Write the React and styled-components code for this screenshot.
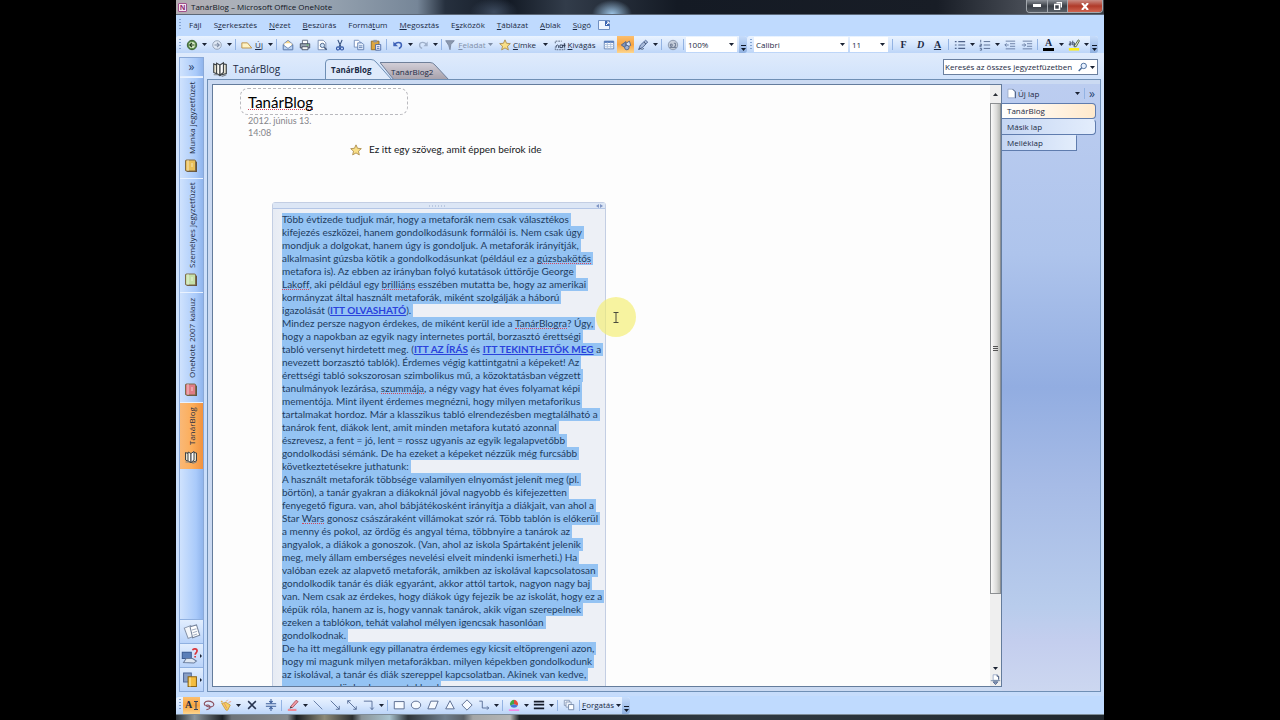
import React, { useState } from 'react'
import styled, { createGlobalStyle } from 'styled-components'

const GlobalStyle = createGlobalStyle`
  * { box-sizing: border-box; }
  body {
    margin: 0;
    background: #000;
    color: #1c2a44;
    font: 8px/12px 'Open Sans', 'Noto Sans', sans-serif;
    overflow: hidden;
  }
  button, input, select {
    margin: 0;
    padding: 0;
    border: 0;
    background: none;
    color: inherit;
    font: inherit;
    outline: none;
  }
  svg { display: block; flex: none; }
  h1, p { margin: 0; font-weight: normal; }
`

const ICONS = {
  back: <><circle cx="7" cy="7" r="5.5" fill="#5f8f4d" stroke="#2f5428" /><circle cx="7" cy="7" r="3.6" fill="#d9ecc9" /><path d="M10 7H4.6M7 4.5 4.4 7 7 9.500" stroke="#1f3d1b" strokeWidth="1.4" fill="none" /></>,
  forward: <><circle cx="7" cy="7" r="5" fill="#dfe8f5" stroke="#8d9bb0" /><path d="M4 7h5.500M7 4.500 9.600 7 7 9.500" stroke="#7f8ea6" strokeWidth="1.3" fill="none" /></>,
  fresh: <path d="M1 10.500V4.500h6.500l5 6z" fill="#fff3c4" stroke="#b88a3c" />,
  mail: <><path d="M1.500 6 7 1.500 12.500 6v6.500h-11z" fill="#f7d688" stroke="#6c86b5" /><path d="M3 5h8v4l-4 2-4-2z" fill="#fff" /><path d="m1.500 7 5.500 4 5.500-4v5.500h-11z" fill="#bcd3f2" stroke="#5c7db1" /></>,
  print: <><path d="M4 1.500h6V6H4z" fill="#fff" stroke="#59657a" /><path d="M1.500 5.500h11v5h-11z" fill="#9aa4b2" stroke="#3f4a5c" /><path d="M3.500 9h7v3.500h-7z" fill="#f7f7f7" stroke="#3f4a5c" /><path d="M9 7h2" stroke="#57d03e" /></>,
  preview: <><path d="M2.500 1.500h6l3 3v8h-9z" fill="#fff" stroke="#6d83aa" /><circle cx="7.500" cy="7.500" r="2.500" fill="#cfe4fa" stroke="#40597f" /><path d="m9.500 9.500 3 3" stroke="#40597f" strokeWidth="1.600" /></>,
  cut: <><path d="m4.500 1 3.500 8M9.500 1 6 9" stroke="#35507f" strokeWidth="1.300" /><circle cx="4.700" cy="11" r="1.800" fill="none" stroke="#2f54a5" strokeWidth="1.300" /><circle cx="9.300" cy="11" r="1.800" fill="none" stroke="#2f54a5" strokeWidth="1.300" /></>,
  copy: <><path d="M1.500 1.500h5l2 2v6h-7z" fill="#fff" stroke="#6b86b7" /><path d="M5.500 4.500h5l2 2v6h-7z" fill="#e4eefc" stroke="#5a78ad" /><path d="M7 8h4M7 10h4" stroke="#5a78ad" /></>,
  paste: <><path d="M1.500 2.500h9v10h-9z" fill="#dda63d" stroke="#8b6722" /><path d="M4 1h4v3H4z" fill="#8d95a3" /><path d="M6.500 6.500h6v6.500h-6z" fill="#f2f6ff" stroke="#3f60a3" /><path d="M8 9h3M8 11h3" stroke="#3f60a3" /></>,
  undo: <><path d="M3 7c1.500-4 8-4 8 0 0 2-1.500 3.500-3 4" fill="none" stroke="#3e62b8" strokeWidth="1.800" /><path d="M1.500 3v5.500H7z" fill="#3e62b8" /></>,
  redo: <><path d="M11 7c-1.500-4-8-4-8 0 0 2 1.500 3.500 3 4" fill="none" stroke="#9fb0ca" strokeWidth="1.600" /><path d="M12.500 3v5.500H7.500z" fill="#9fb0ca" /></>,
  flag: <path d="M2 2h10l-4 4.500-1 6-1.500-5z" fill="#8b98ad" stroke="#7886a0" />,
  star: <path d="m7 1 1.800 4 4.400.4-3.300 3 1 4.300L7 10.400l-3.900 2.300 1-4.300-3.300-3L5.200 5z" fill="#f9df86" stroke="#a8894a" />,
  clip: <><path d="M1.500 5V2.500H9M12.500 5v7.500h-11V9" fill="none" stroke="#48566e" strokeDasharray="2 1" /><path d="M2.500 10V8l1.500-1 1.500 1v2.500M7 7h3v3H7zM12 5v5M9.500 7.500h4" stroke="#25334d" fill="none" /></>,
  table: <><path d="M1.500 2.500h11v9h-11z" fill="#fff" stroke="#5e7cae" /><path d="M1.500 3.500h11" stroke="#4d74b8" strokeWidth="2" /><path d="M1.500 6.500h11M1.500 9h11M5 4v8M9 4v8" stroke="#a9bddb" /></>,
  shapes: <><path d="M1.500 7 7 3v8z" fill="#8196b9" stroke="#485f89" /><path d="m7 5 4-2.500 1.500 5-4.500 2z" fill="#d6e0f0" stroke="#485f89" /><circle cx="8" cy="10" r="2.600" fill="#9db1d4" stroke="#485f89" /></>,
  pen: <><path d="m2 12 2-5 6-5.500 2.500 2L7 9.500z" fill="#a9bbd9" stroke="#4a6290" /><path d="M2 12.500c2-3 3 1 6-1.500M8 3.500l2.500 2.500" fill="none" stroke="#30415f" /></>,
  language: <><circle cx="7" cy="7" r="5.500" fill="#c7cfdc" stroke="#8593aa" /><path d="M4 8.500V6h2v2.500H4M8 5h2v3.500H8M3 10h8" stroke="#606e88" fill="none" /></>,
  bullets: <path d="M1 3h2M1 7h2M1 11h2M5 3h8M5 7h8M5 11h8" stroke="#4e6288" strokeWidth="1.300" />,
  numbers: <path d="M2 1v3M1 6h2v1.500H1V9h2M1 11h2v2H1M5.500 3H13M5.500 7H13M5.500 11H13" fill="none" stroke="#4e6288" />,
  outdent: <path d="M2 2.500h11M7 5.500h6M7 8.500h6M2 11.500h11M5.500 7H1M3 5 1 7l2 2" fill="none" stroke="#60759b" />,
  indent: <path d="M2 2.500h11M7 5.500h6M7 8.500h6M2 11.500h11M1 7h4.500M3.500 5l2 2-2 2" fill="none" stroke="#60759b" />,
  marker: <><path d="M1 10.500h12v3H1z" fill="#ffef1a" /><path d="m7 8.500 5-7.500 1.500 1-4 7H7z" fill="#dfe9cf" stroke="#4b5a38" /><path d="M1.500 3.500h2V7h-2V5.500h2M5.500 2v5h2V4.500h-2" fill="none" stroke="#33415c" /></>,
  window: <><path d="M1.500 2.500h11v9h-11z" fill="#eef5ff" stroke="#6f8fc2" /><path d="M8 3h4.500v5H8z" fill="#3e67b2" /><path d="m9 7 3-3M10 4h2v2" stroke="#fff" fill="none" /></>,
  book: <><path d="M7 12.500 1.500 10V2.500L4 3.500M7 12.500l5.500-1.500V3L10 2.500" fill="#e6e2cf" stroke="#3e4346" /><path d="m4 2 3 1.500v9L4 11z" fill="#fbfaf2" stroke="#3e4346" /><path d="m7 3.500 3-2V10l-3 2.500z" fill="#fff" stroke="#3e4346" /><path d="M1.500 12h4M8.500 13.500 12.500 12" stroke="#7d8387" /></>,
  lasso: <path d="M3 8C0 5.500 2 2.500 6 2.500s7 2 6.500 4.500S7 10 4.500 8.500C3 7.500 6 6 7.500 8s.5 4-3.500 4.500" fill="none" stroke="#8c5160" strokeWidth="1.400" />,
  highlighter: <><path d="m2 5 5-1 5 3-3 6H7z" fill="#f6cf62" stroke="#c79a45" /><path d="m5 5 3 6M7 3l2-2M10 4l3-1" stroke="#e58b6c" /><path d="M2 2v2M1 3h2" stroke="#e5a93c" /></>,
  close: <path d="m2.500 2.500 9 9M11.500 2.500l-9 9" stroke="#26334f" strokeWidth="1.800" />,
  space: <path d="M1 5.500h12M1 8.500h12M7 0v4M5 2.500 7 4.500 9 2.500M7 14v-4M5 11.500 7 9.500l2 2" fill="none" stroke="#3c5d99" strokeWidth="1.200" />,
  redpen: <><path d="m4 9 6.500-7.500L13 3 6.500 10z" fill="#ef9aa3" stroke="#a8525d" /><path d="m4 9 2.500 1L3 11.500z" fill="#333" /><path d="M1 11.500h10V14H1z" fill="#f08a98" /></>,
  line: <path d="m2 2 10 10" stroke="#566f9c" />,
  arrow: <path d="m2 2 10 10M12 8v4H8" stroke="#4c638f" fill="none" />,
  doubleArrow: <path d="m2 2 10 10M12 8.500V12H8.500M2 5.500V2h3.500" stroke="#4c638f" fill="none" />,
  corner: <path d="M1 2.500h9.500V12M8.500 10l2 2.500 2-2.500" stroke="#4c638f" fill="none" />,
  rect: <path d="M1.500 3h11.500v8.500H1.500z" fill="#f6faff" stroke="#4c5f85" />,
  ellipse: <ellipse cx="7" cy="7" rx="5.500" ry="4.500" fill="#f6faff" stroke="#4c5f85" />,
  parallelogram: <path d="M4.500 2.500H13l-3.500 9H1z" fill="#f6faff" stroke="#4c5f85" />,
  triangle: <path d="m7 2 5 9.500H2z" fill="#f6faff" stroke="#4c5f85" />,
  diamond: <path d="m7 1 6 6-6 6-6-6z" fill="#f6faff" stroke="#4c5f85" />,
  elbow: <path d="M1.500 2.500H5v8h7.500M10.500 8.500l2 2-2 2" fill="none" stroke="#4c638f" />,
  palette: <><path d="M7 6V1a5 5 0 0 1 4.500 6.500z" fill="#e34b3b" /><path d="M7 6V1a5 5 0 0 0-4.500 6.500z" fill="#44a548" /><path d="m7 6-4.500 1.500a5 5 0 0 0 9 0z" fill="#4676d8" /><path d="M1 12h12v2H1z" fill="#f38be8" /></>,
  weights: <path d="M1 3h12M1 6.500h12M1 11h12" stroke="#141b28" strokeWidth="2" />,
  stack: <><path d="M1.500 1.500h6v6h-6z" fill="#eef3fb" stroke="#8597b5" /><path d="M3.500 3.500h6v6h-6z" fill="#eef3fb" stroke="#8597b5" /><path d="M6.500 6.500h6v6h-6z" fill="#fff" stroke="#6b7fa2" /></>,
  search: <><circle cx="8" cy="5.500" r="3.800" fill="#e7f1ff" stroke="#466998" strokeWidth="1.300" /><path d="m5 8.500-4 4" stroke="#466998" strokeWidth="2" /></>,
  page: <><path d="M2.500 1.500h6l3 3v8h-9z" fill="#fff" stroke="#93a5c6" /><path d="M8.500 1.500 12 5v8" fill="none" stroke="#34486e" /></>,
  nextPage: <><path d="M4 1h5l2 2v5H4z" fill="#fff" stroke="#8ea0c0" /><path d="M9 1v2h2v4" fill="none" stroke="#34486e" /><path d="M1 8.500h12" stroke="#647c9c" /><path d="M4 10h6l-3 3.500z" fill="#8fa3c6" stroke="#43587f" /></>,
  cards: <><path d="m1 4 5-2 3 8-5 2z" fill="#f4f7fb" stroke="#8592a8" strokeWidth=".8" /><path d="m5.500 3 5-1.500 2.500 8-5.500 2z" fill="#fff" stroke="#75839b" strokeWidth=".8" /><path d="m7 5.500 3.500-1M7.500 7.500l3.500-1M8 9.500l3-1" stroke="#a7b2c4" strokeWidth=".8" /></>,
  question: <><path d="M1 4h7v5H1z" fill="#5b7fb8" stroke="#3a5b92" strokeWidth=".8" /><path d="m2 12 2-3h5l3 2-2 1.500z" fill="#dfe7f2" stroke="#6a7d9d" strokeWidth=".8" /><path d="M9 2.500c.5-1.500 3.500-1.500 3.500.5 0 1.500-1.500 1.500-1.500 3M11 7v1.200" stroke="#d9363c" strokeWidth="1.300" fill="none" /></>,
  books: <><path d="M2 1.500h6v7H2z" fill="#8aa0c6" stroke="#4d6798" strokeWidth=".8" /><path d="M5.500 4.500h6.500v7.500H5.500z" fill="#f4bd3f" stroke="#8a6519" strokeWidth=".8" /><path d="M7 5v7" stroke="#fbe3a0" /></>,
}

const Icon = ({ name, size = 12 }) => (
  <svg width={size} height={size} viewBox="0 0 14 14" fill="none" aria-hidden="true">{ICONS[name]}</svg>
)

const Caret = ({ color = '#1a2233' }) => (
  <svg width="5" height="3" viewBox="0 0 5 3" aria-hidden="true"><path d="M0 0h5L2.500 3z" fill={color} /></svg>
)

/* ---------- window ---------- */

const Desktop = styled.div`
  display: flex;
  justify-content: center;
  height: 100vh;
`

const Window = styled.main`
  display: flex;
  flex-direction: column;
  width: 72.5%;
  min-width: 0;
  background: #bfdafe;
`

const TitleBar = styled.header`
  display: flex;
  align-items: center;
  gap: 4px;
  height: 15px;
  padding-left: 2px;
  color: #10151e;
  border-bottom: 1px solid #5c6878;
  background:
    radial-gradient(ellipse 20px 14px at 436px 14px, #9cc3e4, transparent),
    radial-gradient(ellipse 24px 14px at 318px 12px, #3c4a5e, transparent),
    linear-gradient(90deg, #b3adb2 0, #a9b1bb 8%, #93a0ae 17%, #768698 26%, #26303e 29%, #141b26 36%, #323c4a 42%, #141a24 54%, #181d26 82%, #4a4f58 92%, #3b3f46 100%);
`

const AppIcon = styled.span`
  width: 9px;
  height: 9px;
  border: 1px solid #a04f8b;
  border-radius: 1px;
  background: #f5e6f2;
  color: #8a2c72;
  font: bold 7px/7px 'Open Sans', sans-serif;
  text-align: center;
`

const WindowButtons = styled.div`
  display: flex;
  align-self: flex-start;
  height: 13px;
  margin: 0 1px 0 auto;
  border: 1px solid #a3a8ae;
  border-top: 0;
  border-radius: 0 0 4px 4px;
  overflow: hidden;
`

const WindowButton = styled.button`
  display: grid;
  place-items: center;
  width: ${p => (p.$danger ? 35 : 20)}px;
  border-left: ${p => (p.$first ? 0 : '1px solid #a3a8ae')};
  background: ${p => (p.$danger ? 'linear-gradient(#c98c84, #b03a29 50%, #cf6450)' : 'linear-gradient(#8b9097, #3a3f46 50%, #5b6169)')};
`

/* ---------- menu and toolbars ---------- */

const MenuBar = styled.nav`
  display: flex;
  align-items: center;
  height: 20px;
  margin-bottom: 1px;
  padding-left: 2px;
`

const Grip = styled.span`
  width: 2px;
  height: 12px;
  margin: 0 2px 0 1px;
  background: repeating-linear-gradient(#83a3d2 0 1px, transparent 1px 3px);
`

const MenuItem = styled.button`
  padding: 0 6px;
  white-space: nowrap;
`

const ToolRow = styled.div`
  display: flex;
  height: 17px;
`

const Toolbar = styled.div`
  display: flex;
  align-items: center;
  height: 17px;
  padding-left: 2px;
  border-radius: 3px;
  background: linear-gradient(#eaf3ff, #d6e6fd 50%, #bcd5f8);
`

const Tool = styled.button`
  display: flex;
  align-items: center;
  justify-content: center;
  gap: 2px;
  flex: none;
  min-width: ${p => p.$width || 17}px;
  height: 17px;
  white-space: nowrap;
  color: ${p => (p.$muted ? '#8291aa' : 'inherit')};
  background: ${p => (p.$active ? 'linear-gradient(#fbbf70, #f8a43f 50%, #fdd68f)' : 'none')};
`

const Drop = styled.button`
  display: grid;
  place-items: center;
  flex: none;
  width: 8px;
  height: 17px;
`

const Divider = styled.span`
  flex: none;
  width: 1px;
  height: 11px;
  margin: 0 2px;
  background: #93b3e3;
`

const Overflow = styled.button`
  display: flex;
  align-items: flex-end;
  justify-content: center;
  width: 8px;
  height: 17px;
  padding-bottom: 2px;
  border-radius: 0 3px 3px 0;
  background: linear-gradient(#c6dcfb, #8fb0e0);
`

const Combo = styled.label`
  display: flex;
  align-items: center;
  width: ${p => p.$width}px;
  height: 15px;
  margin-right: 2px;
  padding-right: 3px;
  background: #fff;

  select {
    flex: 1;
    min-width: 0;
    padding-left: 2px;
    appearance: none;
  }
`

const Glyph = styled.span`
  font: ${p => p.$font || 'bold'} 10px/${p => (p.$bar ? 10 : 12)}px 'Liberation Serif', serif;
  text-decoration: ${p => (p.$underline ? 'underline' : 'none')};
  border-bottom: ${p => (p.$bar ? '3px solid #000' : 0)};
  padding: ${p => (p.$bar ? '0 2px' : 0)};
`

/* ---------- notebook rail ---------- */

const Middle = styled.div`
  display: flex;
  flex: 1;
  min-height: 0;
  padding: 0 3px 4px 3px;
  background: linear-gradient(#dfebfc, #cfe1fb 30px, #c6dcfb);
`

const Rail = styled.aside`
  display: flex;
  flex-direction: column;
  width: 25px;
  margin: 4px 3px 0 0;
  border: 1px solid #8aa9d8;
  background: linear-gradient(90deg, #cfe2fd, #a9cafa 70%, #8fb4ec);
`

const RailToggle = styled.button`
  height: 19px;
  border-bottom: 1px solid #e3eefd;
  color: #26426f;
  font-size: 12px;
`

const NotebookTab = styled.button`
  display: flex;
  align-items: center;
  gap: 5px;
  height: ${p => p.$length}px;
  padding: 5px 0;
  writing-mode: vertical-rl;
  transform: rotate(180deg);
  white-space: nowrap;
  border-bottom: 1px solid #e9f2ff;
  background: ${p => (p.$active ? 'linear-gradient(90deg, #f0923f, #fcae5b 50%, #f9b877)' : 'none')};

  svg { transform: rotate(180deg); }
`

const RailButton = styled.button`
  display: flex;
  align-items: center;
  justify-content: center;
  gap: 1px;
  height: 24px;
  border-top: 1px solid #8fb0e0;
  background: linear-gradient(#e2eefe, #b9d3fa);
`

const Spacer = styled.div`
  flex: 1;
`

/* ---------- sections ---------- */

const Content = styled.section`
  display: flex;
  flex-direction: column;
  flex: 1;
  min-width: 0;
`

const SectionRow = styled.div`
  display: flex;
  align-items: flex-end;
  height: 26px;
`

const NotebookName = styled.div`
  display: flex;
  align-items: center;
  gap: 5px;
  width: 118px;
  height: 20px;
  padding-left: 5px;
  font-size: 10px;
`

const SectionTab = styled.button`
  position: relative;
  display: grid;
  z-index: ${p => (p.$front ? 1 : 0)};
  margin-left: ${p => (p.$front ? 0 : -13)}px;
  font-weight: ${p => (p.$active ? 'bold' : 'normal')};

  svg, span { grid-area: 1 / 1; }
  svg { align-self: end; }
  span {
    align-self: end;
    position: relative;
    padding: 0 0 ${p => (p.$front ? 3 : 1)}px ${p => (p.$front ? 6 : 11)}px;
    text-align: left;
  }
`

const SearchBox = styled.form`
  display: flex;
  align-items: center;
  align-self: center;
  gap: 2px;
  width: 155px;
  height: 16px;
  margin: 2px 3px 0 auto;
  padding: 0 2px 0 1px;
  border: 1px solid #6a7f9f;
  background: #fff;

  input {
    flex: 1;
    min-width: 0;
  }
  input::placeholder { color: #1c2a44; opacity: 1; }
`

const Frame = styled.div`
  display: flex;
  flex: 1;
  min-height: 0;
  padding: 4px 0 4px 4px;
  border: 1px solid #6f8fb5;
  background: #cbdaf2;
`

const Page = styled.article`
  position: relative;
  flex: 1;
  min-width: 0;
  padding: 3px 0 0 27px;
  overflow: hidden;
  border: 1px solid #647c9c;
  border-right: 0;
  background: #fdfdfd;
  color: #16181c;
  font: 10px/13px Lato, sans-serif;
  font-variant-ligatures: none;
`

const PageTitle = styled.h1`
  width: 168px;
  height: 27px;
  padding-left: 7px;
  border: 1px dashed #b9b9be;
  border-radius: 8px;
  color: #000;
  font: 15px/26px Lato, sans-serif;
`

const Stamp = styled.p`
  padding-left: 8px;
  color: #85858a;
  font-size: 9px;
  line-height: 12px;
`

const Tagged = styled.p`
  display: flex;
  align-items: center;
  gap: 7px;
  margin: 4px 0 0 110px;
`

const Note = styled.section`
  width: 334px;
  margin: 46px 0 0 32px;
  border: 1px solid #c3cee3;
  border-radius: 3px 3px 0 0;
  background: linear-gradient(90deg, #e6ebf4, #edf0f6 12px);
`

const NoteHandle = styled.div`
  display: grid;
  grid-template-columns: 1fr auto 1fr;
  align-items: center;
  height: 6px;
  padding-right: 2px;
  border-bottom: 1px solid #b4c6e6;
  background: #dce6f5;

  svg:first-child { grid-column: 2; }
  svg:last-child { justify-self: end; }
`

const NoteText = styled.div`
  padding: 4px 0 0 9px;
  color: #1f3c5e;
`

const Line = styled.p`
  width: fit-content;
  height: 13px;
  padding-right: 2px;
  white-space: pre;
  background: #94c3f3;
`

const Link = styled.a`
  color: #2a42dc;
  font-weight: bold;
  text-decoration: underline;
`

const Misspelt = styled.span`
  display: inline-block;
  height: 12px;
  line-height: 13px;
  vertical-align: top;
  border-bottom: 1px dotted #d3455c;
`

const TitleWord = styled(Misspelt)`
  height: 21px;
  line-height: 26px;
`

const Pointer = styled.svg`
  position: absolute;
  left: 383px;
  top: 212px;
`

const ScrollBar = styled.div`
  display: flex;
  flex-direction: column;
  align-items: center;
  width: 12px;
  border: 1px solid #647c9c;
  border-left: 0;
  background: #efefef;
`

const ScrollButton = styled.button`
  display: grid;
  place-items: center;
  width: 11px;
  height: ${p => p.$height}px;
`

const ScrollThumb = styled.div`
  display: grid;
  place-items: center;
  flex: 490;
  width: 11px;
  border: 1px solid #8c8f92;
  background: linear-gradient(90deg, #fafafa, #dcdcda 60%, #b9bbb7);
`

const ScrollTrack = styled.div`
  flex: 69;
`

/* ---------- page list ---------- */

const PageList = styled.aside`
  width: 98px;
  margin: 0 0 -4px;
  background: linear-gradient(#bccdf0, #aec4ec 28%, #92ade1 50%, #a6bbe6 66%, #b8ccec 86%, #c4ceee 92%, #ccd7f0);
`

const NewPage = styled.div`
  display: flex;
  align-items: center;
  gap: 2px;
  height: 19px;
  padding: 0 5px 0 4px;

  button:first-child {
    display: flex;
    align-items: center;
    gap: 1px;
    margin-right: auto;
  }
  button:last-child {
    color: #26426f;
    font-size: 12px;
  }
`

const PageTab = styled.button`
  display: block;
  width: ${p => (p.$sub ? 75 : 94)}px;
  height: 16px;
  padding-left: 5px;
  border: 1px solid #5f7cae;
  border-left: 0;
  border-top-color: ${p => (p.$active ? '#5f7cae' : 'transparent')};
  border-radius: 0 ${p => (p.$sub ? '0 0' : '4px 4px')} 0;
  text-align: left;
  background: ${p => (p.$active ? 'linear-gradient(90deg, #fff, #ffe9cc)' : 'linear-gradient(90deg, #c5d6f3, #e3edfc)')};
`

const DrawRow = styled.footer`
  display: flex;
  align-items: center;
  height: 18px;
`

const TaskBar = styled.div`
  height: 6px;
  border-top: 1px solid #7e8c98;
  background: linear-gradient(90deg, #2b3238 0, #8b959c 2%, #1d2226 5%, #6d7378 6%, #85898c 12%, #1b1f23 13%, #8d8a78 16%, #2b2f31 19%, #8a9499 20%, #a9c3ce 23%, #30363b 25%, #6f7e8c 29%, #5a6066 31%, #a4a6a6 32%, #b4b6b6 36%, #20262b 37%, #303a42 60%, #20272d 100%);
`

// an underscore goes before the letter that gets the accelerator line
const Label = ({ text }) => {
  const at = text.indexOf('_')
  if (at < 0) return <span>{text}</span>
  return <span>{text.slice(0, at)}<u>{text[at + 1]}</u>{text.slice(at + 2)}</span>
}

const menus = ['Fá_jl', 'S_zerkesztés', '_Nézet', '_Beszúrás', 'Formá_tum', '_Megosztás', 'E_szközök', '_Táblázat', '_Ablak', '_Súgó']

const standardTools = [
  { icon: 'back', label: 'Vissza', drop: true },
  { icon: 'forward', label: 'Előre', drop: true },
  '|',
  { icon: 'fresh', label: 'Új', text: '_Új', drop: true, width: 28 },
  '|',
  { icon: 'mail', label: 'E-mail' },
  { icon: 'print', label: 'Nyomtatás' },
  { icon: 'preview', label: 'Nyomtatási kép' },
  { icon: 'cut', label: 'Kivágás', width: 20 },
  { icon: 'copy', label: 'Másolás' },
  { icon: 'paste', label: 'Beillesztés' },
  '|',
  { icon: 'undo', label: 'Visszavonás', drop: true },
  { icon: 'redo', label: 'Mégis', drop: true },
  '|',
  { icon: 'flag', label: 'Feladat', text: '_Feladat', drop: true, muted: true, width: 42 },
  { icon: 'star', label: 'Címke', text: '_Címke', drop: true, width: 47 },
  { icon: 'clip', label: 'Képernyőkivágás', text: '_Kivágás', width: 51 },
]

const insertTools = [
  { icon: 'table', label: 'Táblázat' },
  { icon: 'shapes', label: 'Rajzeszközök', active: true },
  { icon: 'pen', label: 'Toll', drop: true },
  '|',
  { icon: 'language', label: 'Nyelv' },
  '|',
]

const listTools = [
  { icon: 'bullets', label: 'Felsorolás', drop: true },
  { icon: 'numbers', label: 'Számozás', drop: true },
  { icon: 'outdent', label: 'Behúzás csökkentése' },
  { icon: 'indent', label: 'Behúzás növelése' },
  '|',
]

const drawTools = [
  { icon: 'lasso', label: 'Lasszó' },
  { icon: 'highlighter', label: 'Kiemelő', drop: true },
  { icon: 'close', label: 'Törlés', width: 20 },
  { icon: 'space', label: 'Térköz' },
  '|',
  { icon: 'redpen', label: 'Piros toll', drop: true },
  { icon: 'line', label: 'Vonal' },
  { icon: 'arrow', label: 'Nyíl' },
  { icon: 'doubleArrow', label: 'Kettős nyíl' },
  { icon: 'corner', label: 'Összekötő', drop: true },
  '|',
  { icon: 'rect', label: 'Téglalap' },
  { icon: 'ellipse', label: 'Ellipszis' },
  { icon: 'parallelogram', label: 'Paralelogramma' },
  { icon: 'triangle', label: 'Háromszög' },
  { icon: 'diamond', label: 'Rombusz' },
  { icon: 'elbow', label: 'Tengely', drop: true },
  '|',
  { icon: 'palette', label: 'Szín', drop: true },
  { icon: 'weights', label: 'Vastagság', drop: true },
  '|',
  { icon: 'stack', label: 'Kettőzés' },
  '|',
]

const notebooks = [
  { name: 'Munka jegyzetfüzet', length: 101, color: '#e8bf5a' },
  { name: 'Személyes jegyzetfüzet', length: 114, color: '#c5e0a9' },
  { name: 'OneNote 2007 kalauz', length: 110, color: '#e07c86' },
  { name: 'TanárBlog', length: 67, active: true },
]

// [text] is a link, {text} is a word the spell checker marks
const lines = [
  'Több évtizede tudjuk már, hogy a metaforák nem csak választékos',
  'kifejezés eszközei, hanem gondolkodásunk formálói is. Nem csak úgy',
  'mondjuk a dolgokat, hanem úgy is gondoljuk. A metaforák irányítják,',
  'alkalmasint gúzsba kötik a gondolkodásunkat (például ez a {gúzsbakötős}',
  'metafora is). Az ebben az irányban folyó kutatások úttörője George',
  '{Lakoff}, aki például egy {brilliáns} esszében mutatta be, hogy az amerikai',
  'kormányzat által használt metaforák, miként szolgálják a háború',
  'igazolását ([ITT OLVASHATÓ]).',
  'Mindez persze nagyon érdekes, de miként kerül ide a {TanárBlogra}? Úgy,',
  'hogy a napokban az egyik nagy internetes portál, borzasztó érettségi',
  'tabló versenyt hirdetett meg. ([ITT AZ ÍRÁS] és [ITT TEKINTHETŐK MEG] a',
  'nevezett borzasztó tablók). Érdemes végig kattintgatni a képeket! Az',
  'érettségi tabló sokszorosan szimbolikus mű, a közoktatásban végzett',
  'tanulmányok lezárása, {szummája}, a négy vagy hat éves folyamat képi',
  'mementója. Mint ilyent érdemes megnézni, hogy milyen metaforikus',
  'tartalmakat hordoz. Már a klasszikus tabló elrendezésben megtalálható a',
  'tanárok fent, diákok lent, amit minden metafora kutató azonnal',
  'észrevesz, a fent = jó, lent = rossz ugyanis az egyik legalapvetőbb',
  'gondolkodási sémánk. De ha ezeket a képeket nézzük még furcsább',
  'következtetésekre juthatunk:',
  'A használt metaforák többsége valamilyen elnyomást jelenít meg (pl.',
  'börtön), a tanár gyakran a diákoknál jóval nagyobb és kifejezetten',
  'fenyegető figura. van, ahol bábjátékosként irányítja a diákjait, van ahol a',
  'Star {Wars} gonosz császáraként villámokat szór rá. Több tablón is előkerül',
  'a menny és pokol, az ördög és angyal téma, többnyire a tanárok az',
  'angyalok, a diákok a gonoszok. (Van, ahol az iskola Spártaként jelenik',
  'meg, mely állam emberséges nevelési elveit mindenki ismerheti.) Ha',
  'valóban ezek az alapvető metaforák, amikben az iskolával kapcsolatosan',
  'gondolkodik tanár és diák egyaránt, akkor attól tartok, nagyon nagy baj',
  'van. Nem csak az érdekes, hogy diákok úgy fejezik be az iskolát, hogy ez a',
  'képük róla, hanem az is, hogy vannak tanárok, akik vígan szerepelnek',
  'ezeken a tablókon, tehát valahol mélyen igencsak hasonlóan',
  'gondolkodnak.',
  'De ha itt megállunk egy pillanatra érdemes egy kicsit eltöprengeni azon,',
  'hogy mi magunk milyen metaforákban. milyen képekben gondolkodunk',
  'az iskolával, a tanár és diák szereppel kapcsolatban. Akinek van kedve,',
  'ossza meg velünk a kommentekben!',
]

const renderLine = line => line.split(/(\[.*?\]|\{.*?\})/).map((part, i) => {
  if (part[0] === '[') return <Link key={i} href="#">{part.slice(1, -1)}</Link>
  if (part[0] === '{') return <Misspelt key={i}>{part.slice(1, -1)}</Misspelt>
  return part
})

const Tools = ({ items }) => items.map((item, i) => item === '|' ? <Divider key={i} /> : (
  <React.Fragment key={i}>
    <Tool type="button" aria-label={item.label} $active={item.active} $muted={item.muted} $width={item.width}>
      <Icon name={item.icon} />
      {item.text && <Label text={item.text} />}
    </Tool>
    {item.drop && <Drop type="button" aria-label={item.label + ' lista'}><Caret color={item.muted ? '#7f8ea6' : undefined} /></Drop>}
  </React.Fragment>
))

const More = () => (
  <Overflow type="button" aria-label="További gombok">
    <svg width="5" height="6" viewBox="0 0 5 6"><path d="M0 .5h5" stroke="#101828" /><path d="M0 3h5L2.500 6z" fill="#101828" /></svg>
  </Overflow>
)

const NotebookIcon = ({ color }) => (
  <svg width="14" height="14" viewBox="0 0 14 14" aria-hidden="true">
    <path d="M1.500 1.500h9.500l2 1.500v10H3.500l-2-1.500z" fill="#62523d" />
    <rect x="1.500" y="1" width="10" height="11" rx="1" fill={color} stroke="#7d6b4b" />
    <path d="M4 1v11M8 4v4" stroke="#fff" strokeOpacity=".6" />
  </svg>
)

const SideCaret = () => (
  <svg width="2" height="4" aria-hidden="true"><path d="M0 0v4l2-2z" fill="#1a2233" /></svg>
)

function App() {
  const [section, setSection] = useState('TanárBlog')
  const [page, setPage] = useState('TanárBlog')

  return (
    <Desktop>
      <GlobalStyle />
      <Window>
        <TitleBar>
          <AppIcon>N</AppIcon>
          <span>TanárBlog – Microsoft Office OneNote</span>
          <WindowButtons>
            <WindowButton type="button" aria-label="Kis méret" $first>
              <svg width="8" height="4"><path d="M0 0h8v3H0z" fill="#fff" /></svg>
            </WindowButton>
            <WindowButton type="button" aria-label="Előző méret">
              <svg width="8" height="8"><path d="M2.500 0.500h5v5M.5 2.500h5v5h-5z" fill="none" stroke="#fff" strokeWidth="1.500" /></svg>
            </WindowButton>
            <WindowButton type="button" aria-label="Bezárás" $danger>
              <svg width="8" height="7"><path d="m1 0 6 7M7 0 1 7" stroke="#fff" strokeWidth="2" /></svg>
            </WindowButton>
          </WindowButtons>
        </TitleBar>

        <MenuBar>
          <Grip />
          {menus.map(m => <MenuItem type="button" key={m}><Label text={m} /></MenuItem>)}
          <Icon name="window" size={14} />
        </MenuBar>

        <ToolRow>
          <Toolbar>
            <Grip />
            <Tools items={standardTools} />
            <Tools items={insertTools} />
            <Combo $width={51}>
              <select aria-label="Nagyítás"><option>100%</option></select>
              <Caret />
            </Combo>
            <More />
          </Toolbar>
          <Toolbar>
            <Grip />
            <Combo $width={94}>
              <select aria-label="Betűtípus"><option>Calibri</option></select>
              <Caret />
            </Combo>
            <Combo $width={38}>
              <select aria-label="Betűméret"><option>11</option></select>
              <Caret />
            </Combo>
            <Divider />
            <Tool type="button" aria-label="Félkövér"><Glyph>F</Glyph></Tool>
            <Tool type="button" aria-label="Dőlt"><Glyph $font="italic bold">D</Glyph></Tool>
            <Tool type="button" aria-label="Aláhúzott"><Glyph $underline>A</Glyph></Tool>
            <Divider />
            <Tools items={listTools} />
            <Tool type="button" aria-label="Betűszín"><Glyph $bar>A</Glyph></Tool>
            <Drop type="button" aria-label="Betűszín lista"><Caret /></Drop>
            <Tools items={[{ icon: 'marker', label: 'Kiemelés', drop: true }]} />
            <More />
          </Toolbar>
        </ToolRow>

        <Middle>
          <Rail>
            <RailToggle type="button" aria-label="Kibontás">»</RailToggle>
            {notebooks.map(n => (
              <NotebookTab type="button" key={n.name} $length={n.length} $active={n.active}>
                {n.active ? <Icon name="book" size={14} /> : <NotebookIcon color={n.color} />}
                {n.name}
              </NotebookTab>
            ))}
            <Spacer />
            <RailButton type="button" aria-label="Jegyzetek"><Icon name="cards" size={18} /></RailButton>
            <RailButton type="button" aria-label="Kérdések"><Icon name="question" size={18} /><SideCaret /></RailButton>
            <RailButton type="button" aria-label="Jegyzetfüzetek"><Icon name="books" size={18} /><SideCaret /></RailButton>
          </Rail>

          <Content>
            <SectionRow>
              <NotebookName><Icon name="book" size={16} /> TanárBlog</NotebookName>
              <SectionTab type="button" $front $active={section === 'TanárBlog'} onClick={() => setSection('TanárBlog')}>
                <svg width="68" height="20"><path d="M.5 21V4q0-3.500 3.500-3.500h42q3 0 5 2.500l16 18" fill="#dfeafb" stroke="#6f8fb5" /></svg>
                <span>TanárBlog</span>
              </SectionTab>
              <SectionTab type="button" $active={section === 'TanárBlog2'} onClick={() => setSection('TanárBlog2')}>
                <svg width="72" height="17">
                  <defs>
                    <linearGradient id="tabFill" x1="0" y1="0" x2="0" y2="1">
                      <stop offset="0" stopColor="#d3cfd8" />
                      <stop offset="1" stopColor="#a59fa9" />
                    </linearGradient>
                  </defs>
                  <path d="M0 .5h50q3 0 5 2.500l14 15H14z" fill="url(#tabFill)" stroke="#6f7f99" />
                </svg>
                <span>TanárBlog2</span>
              </SectionTab>
              <SearchBox onSubmit={e => e.preventDefault()}>
                <input aria-label="Keresés" placeholder="Keresés az összes jegyzetfüzetben" />
                <Icon name="search" size={10} />
                <Caret />
              </SearchBox>
            </SectionRow>

            <Frame>
              <Page>
                <PageTitle><TitleWord>TanárBlog</TitleWord></PageTitle>
                <Stamp>2012. június 13.</Stamp>
                <Stamp>14:08</Stamp>
                <Tagged><Icon name="star" /> Ez itt egy szöveg, amit éppen beírok ide</Tagged>
                <Note>
                  <NoteHandle>
                    <svg width="18" height="2"><path d="M0 1h18" stroke="#9aaccd" strokeDasharray="1 2" /></svg>
                    <svg width="7" height="4"><path d="M3 0v4L0 2zM4 0v4l3-2z" fill="#7f95c4" /></svg>
                  </NoteHandle>
                  <NoteText>
                    {lines.map(l => <Line key={l}>{renderLine(l)}</Line>)}
                  </NoteText>
                </Note>
                <Pointer width="40" height="40">
                  <circle cx="20" cy="20" r="20" fill="#f5ee6e" fillOpacity=".65" />
                  <path d="M17.500 15.500h5M17.500 25.500h5M20 15.500v10" stroke="#4a4a3c" />
                </Pointer>
              </Page>
              <ScrollBar>
                <ScrollButton type="button" aria-label="Fel" $height={18}>
                  <svg width="5" height="3"><path d="M0 3h5L2.500 0z" fill="#2b2f36" /></svg>
                </ScrollButton>
                <ScrollThumb><svg width="5" height="6"><path d="M0 .5h5M0 2.500h5M0 4.500h5" stroke="#555" /></svg></ScrollThumb>
                <ScrollTrack />
                <ScrollButton type="button" aria-label="Le" $height={10}><Caret /></ScrollButton>
                <ScrollButton type="button" aria-label="Következő lap" $height={13}><Icon name="nextPage" size={11} /></ScrollButton>
              </ScrollBar>
              <PageList>
                <NewPage>
                  <button type="button"><Icon name="page" size={11} /> Új lap</button>
                  <button type="button" aria-label="Új lap lista"><Caret /></button>
                  <Divider />
                  <button type="button" aria-label="Összecsukás">»</button>
                </NewPage>
                {['TanárBlog', 'Másik lap', 'Melléklap'].map(name => (
                  <PageTab type="button" key={name} $active={page === name} $sub={name === 'Melléklap'} onClick={() => setPage(name)}>
                    {name}
                  </PageTab>
                ))}
              </PageList>
            </Frame>
          </Content>
        </Middle>

        <DrawRow>
          <Toolbar>
            <Grip />
            <Tool type="button" aria-label="Szöveg" $active>
              <Glyph>A</Glyph>
              <svg width="4" height="9"><path d="M0 .5h4M0 8.500h4M2 .5v8" stroke="#33415c" /></svg>
            </Tool>
            <Tools items={drawTools} />
            <Tool type="button"><Label text="_Forgatás" /></Tool>
            <Drop type="button" aria-label="Forgatás lista"><Caret /></Drop>
            <More />
          </Toolbar>
        </DrawRow>
        <TaskBar />
      </Window>
    </Desktop>
  )
}

export default App
